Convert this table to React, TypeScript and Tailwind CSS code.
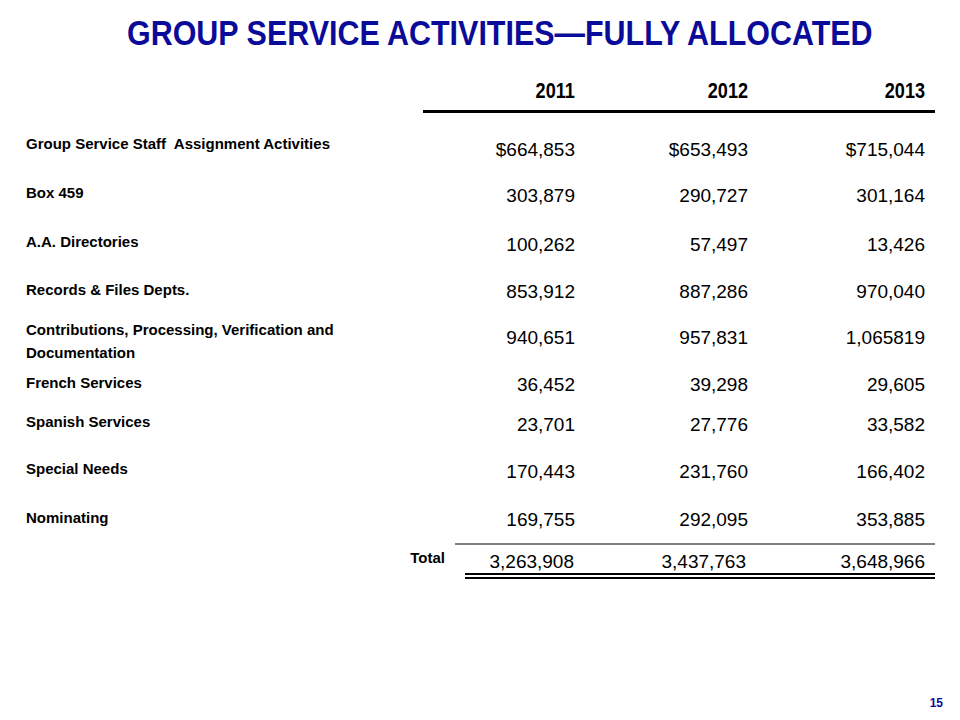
import React from 'react';

const FONT = "font-['Liberation_Sans',Arial,sans-serif]";

const rows = [
    { label: 'Group Service Staff  Assignment Activities', v: ['$664,853', '$653,493', '$715,044'], h: 'h-[46px]', lp: 'pt-[9px]' },
    { label: 'Box 459', v: ['303,879', '290,727', '301,164'], h: 'h-[49px]', lp: 'pt-[12px]' },
    { label: 'A.A. Directories', v: ['100,262', '57,497', '13,426'], h: 'h-[47px]', lp: 'pt-[12px]' },
    { label: 'Records & Files Depts.', v: ['853,912', '887,286', '970,040'], h: 'h-[46px]', lp: 'pt-[13px]' },
    { label: 'Contributions, Processing, Verification and Documentation', v: ['940,651', '957,831', '1,065819'], h: 'h-[47px]', lp: 'pt-[3px] leading-[23px]' },
    { label: 'French Services', v: ['36,452', '39,298', '29,605'], h: 'h-[40px]', lp: 'pt-[13px]' },
    { label: 'Spanish Services', v: ['23,701', '27,776', '33,582'], h: 'h-[47px]', lp: 'pt-[12px]' },
    { label: 'Special Needs', v: ['170,443', '231,760', '166,402'], h: 'h-[48px]', lp: 'pt-[12px]' },
    { label: 'Nominating', v: ['169,755', '292,095', '353,885'], h: 'h-[46px]', lp: 'pt-[13px]' },
];

const years = ['2011', '2012', '2013'];

const App: React.FC = () => {
    return (
        <div className={`w-[960px] h-[720px] bg-white relative overflow-hidden ${FONT}`}>
            <div className="pt-[13px] pl-[127px] h-[53px]">
                <h1 className="inline-block origin-left scale-x-[0.87] text-[35px] leading-[40px] font-bold text-[#0b0b99] whitespace-nowrap">
                    GROUP SERVICE ACTIVITIES—FULLY ALLOCATED
                </h1>
            </div>

            {/* year header */}
            <div className="mt-[26px] flex">
                <div className="w-[423px]" />
                <div className="w-[512px] border-b-[3px] border-black pb-[7px] grid grid-cols-[152px_173px_177px_10px] text-[22px] leading-[24px] font-bold text-black">
                    {years.map((y) => (
                        <div key={y} className="text-right">
                            <span className="inline-block origin-right scale-x-[0.82]">{y}</span>
                        </div>
                    ))}
                    <div />
                </div>
            </div>

            <div className="mt-[14px]">
                {rows.map((r) => (
                    <div key={r.label} className={`flex ${r.h}`}>
                        <div className={`w-[423px] pl-[26px] pr-[60px] text-[15px] leading-[16px] font-bold text-black ${r.lp}`}>
                            <span className="whitespace-pre-wrap">{r.label}</span>
                        </div>
                        <div className="grid grid-cols-[152px_173px_177px_10px] pt-[12px] text-[19px] leading-[22px] text-black">
                            {r.v.map((x, i) => (
                                <div key={i} className="text-right">{x}</div>
                            ))}
                            <div />
                        </div>
                    </div>
                ))}
            </div>

            {/* total */}
            <div className="flex">
                <div className="w-[455px] pr-[10px] pt-[7px] text-right text-[15px] leading-[16px] font-bold text-black">Total</div>
                <div className="w-[480px] border-t-2 border-[#808080]">
                    <div className="ml-[10px] border-b-[6px] border-double border-black grid grid-cols-[109px_172px_179px_10px] pt-[6px] text-[19px] leading-[22px] text-black">
                        <div className="text-right">3,263,908</div>
                        <div className="text-right">3,437,763</div>
                        <div className="text-right">3,648,966</div>
                        <div />
                    </div>
                </div>
            </div>

            <div className="absolute right-[17px] bottom-[8px] text-[12px] font-bold text-[#0b0b99]">15</div>
        </div>
    );
};

export default App;
